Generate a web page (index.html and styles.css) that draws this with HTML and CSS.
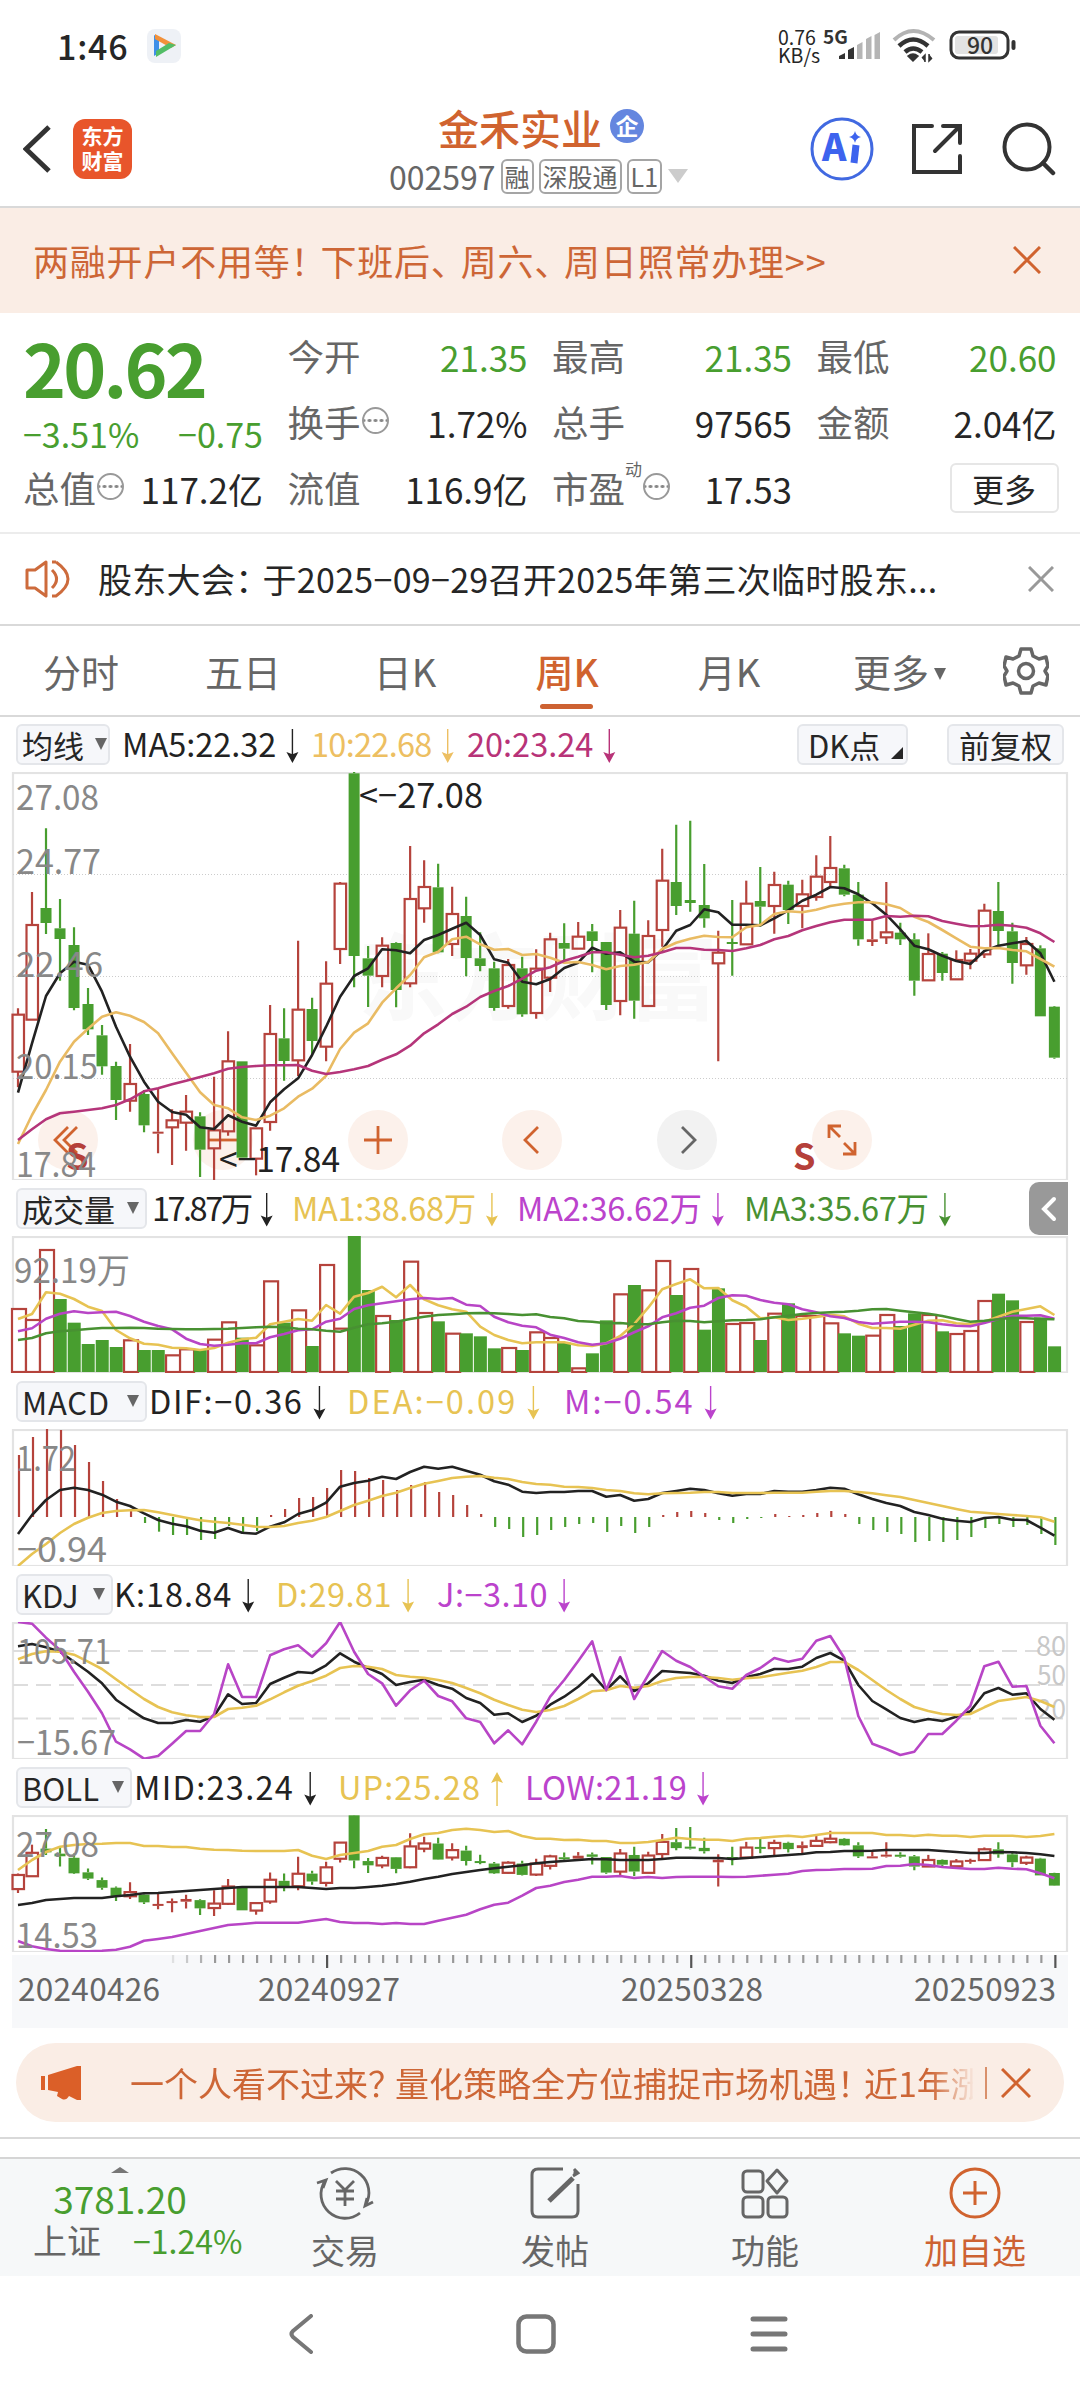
FILE: index.html
```html
<!DOCTYPE html>
<html lang="zh-CN">

<head>
    <meta charset="UTF-8">
    <meta name="viewport" content="width=device-width, initial-scale=1.0">
    <title>金禾实业 002597</title>
    <link rel="stylesheet" href="styles.css">
</head>

<body>
    <div class="status">
        <span class="clock">1:46</span>
        <svg class="app-icon" width="34" height="34" viewBox="0 0 34 34">
            <rect width="34" height="34" rx="8" fill="#eef1f6" />
            <path d="M7 6v21l5-3V9z" fill="#3f8fe8" />
            <path d="M8 5l21 11-5 3L8 10z" fill="#f2913a" />
            <path d="M29 16L9 28v-6l13-8z" fill="#52bd66" />
        </svg>
        <div class="net"><span>0.76</span><span>KB/s</span></div>
        <svg class="signal" width="62" height="36" viewBox="0 0 62 36">
            <text x="1" y="16" class="five-g">5G</text>
            <path d="M17 31h6v-6l-6 3zM26 31h6V19l-6 3z" fill="#333" />
            <path d="M35 31h5.5V14l-5.5 3zM44 31h5.5V8L44 11zM52.5 31h5.5V4l-5.5 3z" fill="#b5b5b5" />
        </svg>
        <svg class="wifi" width="44" height="36" viewBox="0 0 44 36">
            <path d="M2 12Q21-6 42 12" fill="none" stroke="#b3b3b3" stroke-width="4" />
            <path d="M7 18Q21 5 36 18M13 24Q21 17 30 24" fill="none" stroke="#333" stroke-width="4.5" />
            <path d="M16 28Q21 24 26 28L21 33zM33 34v-7l-3 3M37 26v7l3-3" fill="#333" stroke="#333" stroke-width="1.5" />
        </svg>
        <svg width="68" height="32" viewBox="0 0 68 32">
            <rect x="2" y="2" width="57" height="26" rx="8" fill="#fff" stroke="#333" stroke-width="3" />
            <rect x="6" y="6" width="43" height="18" rx="3" fill="#e2e2e2" />
            <path d="M64.5 12v6" stroke="#333" stroke-width="4" stroke-linecap="round" />
            <text x="31" y="23.5" text-anchor="middle" class="battery">90</text>
        </svg>
    </div>

    <header class="header">
        <svg class="back" width="30" height="50" viewBox="0 0 30 50">
            <path d="M26 3L3 25l23 22" fill="none" stroke="#333" stroke-width="5" />
        </svg>
        <div class="logo">东方<br>财富</div>
        <div class="title">
            <div class="name">金禾实业<span class="badge">企</span></div>
            <div class="code">002597<i>融</i><i>深股通</i><i>L1</i>
                <svg width="20" height="14" viewBox="0 0 20 14"><path d="M0 0h20L10 14z" fill="#ccc" /></svg>
            </div>
        </div>
        <svg class="ai" width="64" height="64" viewBox="0 0 64 64">
            <circle cx="32" cy="32" r="30" fill="none" stroke="#4169e1" stroke-width="3" />
            <text x="12" y="44" class="ai-text">A</text>
            <path d="M46 28l-2 18" stroke="#3d63ee" stroke-width="7" />
            <path d="M45 14q1 5 6 6-5 1-6 6-1-5-6-6 5-1 6-6z" fill="#3d63ee" />
        </svg>
        <svg class="share" width="52" height="52" viewBox="0 0 52 52">
            <path d="M21 3H3v46h46V33M32 3h17v17M48 4L24 28" fill="none" stroke="#333" stroke-width="4" stroke-linecap="round" />
        </svg>
        <svg width="54" height="54" viewBox="0 0 54 54">
            <circle cx="25" cy="25" r="22.5" fill="none" stroke="#333" stroke-width="4" />
            <path d="M41 41l10 10" stroke="#333" stroke-width="4.5" stroke-linecap="round" />
        </svg>
    </header>

    <div class="ad">
        <span>两融开户不用等<b>！</b>下班后<b>、</b>周六<b>、</b>周日照常办理&gt;&gt;</span>
        <svg width="28" height="28" viewBox="0 0 28 28"><path d="M1 1l26 26M27 1L1 27" stroke="#d0632f" stroke-width="3" /></svg>
    </div>

    <section class="quote">
        <div class="col">
            <div class="price">20.62</div>
            <div class="change"><span>−3.51%</span><span>−0.75</span></div>
            <div class="cell"><label>总值</label><em></em><span>117.2亿</span></div>
        </div>
        <div class="col">
            <div class="cell down"><label>今开</label><span>21.35</span></div>
            <div class="cell"><label>换手</label><em></em><span>1.72%</span></div>
            <div class="cell"><label>流值</label><span>116.9亿</span></div>
        </div>
        <div class="col">
            <div class="cell down"><label>最高</label><span>21.35</span></div>
            <div class="cell"><label>总手</label><span>97565</span></div>
            <div class="cell"><label>市盈</label><sup>动</sup><em></em><span>17.53</span></div>
        </div>
        <div class="col">
            <div class="cell down"><label>最低</label><span>20.60</span></div>
            <div class="cell"><label>金额</label><span>2.04亿</span></div>
            <div class="cell"><button class="more">更多</button></div>
        </div>
    </section>

    <div class="news">
        <svg width="46" height="40" viewBox="0 0 46 40">
            <path d="M2 11v18h8l11 8V3L10 11zM27 11q9 9 0 18M31 3q24 17 0 34h-4M27 3h4" fill="none" stroke="#cd6b3c" stroke-width="3" stroke-linejoin="round" />
        </svg>
        <span>股东大会<b>：</b>于2025−09−29召开2025年第三次临时股东...</span>
        <svg width="26" height="26" viewBox="0 0 26 26"><path d="M1 1l24 24M25 1L1 25" stroke="#999" stroke-width="3" /></svg>
    </div>

    <nav class="tabs">
        <a>分时</a>
        <a>五日</a>
        <a>日K</a>
        <a class="active">周K</a>
        <a>月K</a>
        <a class="tab-more">更多<i class="tri"></i></a>
        <svg width="46" height="48" viewBox="0 0 46 48">
            <path d="M18 2h10l2 7 6 3 7-2 2 9-3 5 3 5-2 9-7-2-6 3-2 7H18l-2-7-6-3-7 2-2-9 3-5-3-5 2-9 7 2 6-3z" fill="none" stroke="#666" stroke-width="3.5" stroke-linejoin="round" />
            <circle cx="23" cy="24" r="7.5" fill="none" stroke="#666" stroke-width="3.5" />
        </svg>
    </nav>

    <main class="charts">
        <div class="legend first">
            <button class="b-ma">均线<i class="tri"></i></button>
            <span class="black ma5">MA5:22.32</span>
            <span class="gold ma10">10:22.68</span>
            <span class="magenta">20:23.24</span>
            <button class="dk">DK点<i class="corner"></i></button>
            <button class="fq">前复权</button>
        </div>
        <svg id="price" width="1080" height="408"></svg>

        <div class="legend">
            <button class="b-vol">成交量<i class="tri"></i></button>
            <span class="black vol">17.87万</span>
            <span class="yellow vma1">MA1:38.68万</span>
            <span class="purple vma2">MA2:36.62万</span>
            <span class="green vma3">MA3:35.67万</span>
            <div class="drawer"><svg width="16" height="26" viewBox="0 0 16 26"><path d="M13 3L3 13l10 10" fill="none" stroke="#fff" stroke-width="4" stroke-linecap="round" /></svg></div>
        </div>
        <svg id="volume" width="1080" height="137"></svg>

        <div class="legend">
            <button class="b-macd">MACD<i class="tri"></i></button>
            <span class="black dif">DIF:−0.36</span>
            <span class="yellow dea">DEA:−0.09</span>
            <span class="purple m">M:−0.54</span>
        </div>
        <svg id="macd" width="1080" height="137"></svg>

        <div class="legend">
            <button class="b-kdj">KDJ<i class="tri"></i></button>
            <span class="black k">K:18.84</span>
            <span class="yellow d">D:29.81</span>
            <span class="purple j">J:−3.10</span>
        </div>
        <svg id="kdj" width="1080" height="137"></svg>

        <div class="legend">
            <button class="b-boll">BOLL<i class="tri"></i></button>
            <span class="black mid">MID:23.24</span>
            <span class="yellow up">UP:25.28</span>
            <span class="purple low">LOW:21.19</span>
        </div>
        <svg id="boll" width="1080" height="137"></svg>

        <div class="axis">
            <svg id="ticks" width="1080" height="16"></svg>
            <div class="dates"><span>20240426</span><span>20240927</span><span>20250328</span><span>20250923</span></div>
        </div>
    </main>

    <div class="promo">
        <svg width="42" height="36" viewBox="0 0 42 36">
            <path d="M2 11v14" stroke="#db5f28" stroke-width="4" />
            <path d="M7 10L36 1h4v34h-4l-8-4q-3 5-7 3l-5-3 1-4-10-2z" fill="#db5f28" />
        </svg>
        <div class="promo-text">一个人看不过来<b>？</b>量化策略全方位捕捉市场机遇<b>！</b>近1年涨</div>
        <i class="divider"></i>
        <svg width="30" height="30" viewBox="0 0 30 30"><path d="M1 1l28 28M29 1L1 29" stroke="#d0632f" stroke-width="3" /></svg>
    </div>

    <footer class="toolbar">
        <div class="index">
            <i class="caret"></i>
            <div class="value">3781.20</div>
            <div class="pct"><span>上证</span><b>−1.24%</b></div>
        </div>
        <div class="item">
            <svg width="58" height="54" viewBox="0 0 58 54">
                <path d="M15 7A24 24 0 0 1 50 38M44 47A24 24 0 0 1 9 15M1 17l9-3-3 8M57 36l-8 4 2-8" fill="none" stroke="#666" stroke-width="2.8" />
                <path d="M20 15l9 9 9-9M29 24v16M20 25h18M20 33h18" fill="none" stroke="#666" stroke-width="2.8" />
            </svg>
            交易
        </div>
        <div class="item">
            <svg width="50" height="54" viewBox="0 0 50 54">
                <path d="M33 3H8q-6 0-6 6v36q0 6 6 6h34q6 0 6-6V18" fill="none" stroke="#666" stroke-width="3" />
                <path d="M43 12L19 35" stroke="#666" stroke-width="5" />
                <path d="M44 3l4 4-5 3" fill="#666" stroke="#666" stroke-width="3" />
            </svg>
            发帖
        </div>
        <div class="item">
            <svg width="48" height="54" viewBox="0 0 48 54">
                <g fill="none" stroke="#666" stroke-width="3">
                    <rect x="2" y="5" width="20" height="21" rx="4" />
                    <rect x="2" y="31" width="20" height="20" rx="4" />
                    <rect x="27" y="31" width="19" height="20" rx="4" />
                    <path d="M36 4l10 11-10 12-10-12z" stroke-linejoin="round" />
                </g>
            </svg>
            功能
        </div>
        <div class="item add">
            <svg width="52" height="54" viewBox="0 0 52 54">
                <circle cx="26" cy="27" r="24" fill="none" stroke="#d0632f" stroke-width="3" />
                <path d="M14 27h24M26 15v24" stroke="#d0632f" stroke-width="3" />
            </svg>
            加自选
        </div>
    </footer>

    <div class="sysnav">
        <svg width="26" height="40" viewBox="0 0 26 40"><path d="M23 2L5 17q-3 3 0 6l18 15" fill="none" stroke="#777" stroke-width="4" stroke-linecap="round" /></svg>
        <svg class="home" width="40" height="40" viewBox="0 0 40 40"><rect x="2.5" y="2.5" width="35" height="35" rx="8" fill="none" stroke="#777" stroke-width="4.5" /></svg>
        <svg width="38" height="38" viewBox="0 0 38 38"><path d="M3 4h32M3 19h32M3 34h32" stroke="#777" stroke-width="5" stroke-linecap="round" /></svg>
    </div>

    <script src="chart.js"></script>
</body>

</html>
```
FILE: styles.css
```css
* {
    box-sizing: border-box;
}

body {
    margin: 0;
    width: 1080px;
    height: 2400px;
    overflow: hidden;
    background: #fff;
    color: #262626;
    font-family: "Noto Sans CJK SC", sans-serif;
    font-size: 34px;
    line-height: 1;
}

svg {
    display: block;
    flex: none;
}

i,
em {
    font-style: normal;
}

button {
    font: inherit;
    color: inherit;
    padding: 0;
}

/* status bar */
.status {
    height: 92px;
    padding: 0 63px 0 57px;
    display: flex;
    align-items: center;
}

.clock {
    font-size: 34px;
    font-weight: 500;
    width: 90px;
    letter-spacing: 0.8px;
}

.net {
    margin-left: auto;
    width: 44px;
    font-size: 19.5px;
    line-height: 18px;
    display: flex;
    flex-direction: column;
}

.five-g {
    font-size: 19px;
    font-weight: 700;
    fill: #333;
}

.signal {
    margin-right: 8px;
    overflow: visible;
}

.wifi {
    margin-right: 13px;
}

.battery {
    font-size: 23px;
    font-weight: 500;
    fill: #333;
}

/* header */
.header {
    height: 116px;
    padding: 0 24px 0 23px;
    border-bottom: 2px solid #d9d9d9;
    display: flex;
    align-items: center;
}

.logo {
    width: 59px;
    height: 60px;
    margin-left: 20px;
    border-radius: 12px;
    background: #e8552b;
    color: #fff;
    font-size: 21px;
    line-height: 25px;
    font-weight: 700;
    text-align: center;
    padding-top: 4px;
}

.title {
    width: 300px;
    margin-left: 257px;
    padding-top: 2px;
    white-space: nowrap;
}

.name {
    display: flex;
    align-items: center;
    margin-left: 49px;
    color: #d0632f;
    font-size: 41px;
    font-weight: 500;
}

.badge {
    width: 34px;
    height: 34px;
    margin: -2px 0 0 8px;
    border-radius: 50%;
    background: #6486df;
    color: #fff;
    font-size: 23px;
    line-height: 33px;
    font-weight: 700;
    text-align: center;
}

.code {
    display: flex;
    align-items: center;
    margin-top: 11px;
    color: #666;
    font-size: 32px;
}

.code i {
    height: 35px;
    margin-left: 5px;
    padding: 0 2px;
    border: 2px solid #a5a5a5;
    border-radius: 6px;
    font-size: 25px;
    line-height: 30px;
}

.code svg {
    margin-left: 6px;
}

.ai {
    margin-left: 121px;
}

.ai-text {
    font-size: 37px;
    font-weight: 900;
    fill: #3d63ee;
}

.share {
    margin: 0 39px 0 37px;
}

/* promo strips */
.ad {
    height: 105px;
    padding: 0 39px 2px 33px;
    background: #faede5;
    color: #cd6636;
    font-size: 36px;
    letter-spacing: 0.8px;
    display: flex;
    align-items: center;
    justify-content: space-between;
}

.ad b,
.news b,
.promo b {
    font-weight: 400;
    margin-right: -7px;
}

/* quote */
.quote {
    height: 221px;
    padding: 10px 24px 0 23px;
    border-bottom: 2px solid #ececec;
    display: grid;
    grid-template-columns: repeat(4, 240px);
    column-gap: 24.5px;
}

.price {
    height: 90px;
    color: #489e2f;
    font-size: 73px;
    line-height: 86px;
    font-weight: 700;
    letter-spacing: -2.8px;
}

.change {
    height: 42px;
    color: #489e2f;
    font-size: 34px;
    display: flex;
    align-items: center;
    justify-content: space-between;
}

.cell {
    height: 66px;
    display: flex;
    align-items: center;
    font-size: 35px;
}

.cell label {
    color: #666;
    font-size: 36.5px;
}

.cell span {
    margin-left: auto;
}

.down span {
    color: #489e2f;
}

.cell em {
    width: 27px;
    height: 27px;
    margin: -4px 0 0 1px;
    border: 2px solid #999;
    border-radius: 50%;
    background: radial-gradient(circle, #888 1.6px, transparent 2px) 0 0 / 6px 100%;
    background-position: 2.5px 0;
}

.cell sup {
    align-self: flex-start;
    font-size: 17px;
    color: #666;
    line-height: 28px;
}

.more {
    width: 109px;
    height: 50px;
    margin: 0 -2px 0 auto;
    border: 2px solid #e6e6e6;
    border-radius: 6px;
    background: #fff;
    font-size: 32px;
    line-height: 42px;
}

/* news */
.news {
    height: 92px;
    padding: 0 26px 0 25px;
    border-bottom: 2px solid #d9d9d9;
    display: flex;
    align-items: center;
}

.news span {
    flex: 1;
    margin-left: 27px;
    letter-spacing: 0.3px;
}

/* tabs */
.tabs {
    height: 91px;
    border-bottom: 2px solid #d9d9d9;
    display: flex;
    align-items: center;
    color: #666;
    font-size: 38px;
}

.tabs a {
    position: relative;
    width: 162px;
    line-height: 86px;
    text-align: center;
}

.tabs .active {
    color: #d0632f;
    font-weight: 500;
}

.tabs .active::after {
    content: "";
    position: absolute;
    left: 54px;
    bottom: 5px;
    width: 53px;
    height: 5px;
    border-radius: 3px;
    background: #cd6232;
}

.tabs .tab-more {
    width: 193px;
    padding-right: 14px;
}

.tri {
    display: inline-block;
    border: 6.5px solid transparent;
    border-top: 12px solid #666;
    border-bottom: 0;
    margin-left: 5px;
    vertical-align: 7px;
}

/* chart legends */
.legend {
    position: relative;
    height: 56px;
    padding: 0 16px;
    display: flex;
    align-items: center;
    font-size: 32.5px;
}

.legend.first {
    height: 55px;
}

.legend button {
    position: relative;
    height: 41px;
    padding: 0 0 0 4px;
    border: 2px solid #e4e6ea;
    border-radius: 6px;
    background: #f6f7fa;
    font-size: 31px;
    line-height: 35px;
    text-align: left;
    white-space: nowrap;
}

.legend .tri {
    position: absolute;
    right: 6px;
    top: 12px;
    margin: 0;
}

.legend .b-ma { width: 94px; margin-right: 12px; }
.legend .b-vol { width: 131px; margin-right: 5px; }
.legend .b-macd { width: 131px; margin-right: 2px; letter-spacing: 0.8px; }
.legend .b-kdj { width: 97px; margin-right: 1px; }
.legend .b-boll { width: 116px; margin-right: 2px; }

.legend .b-ma .tri {
    right: 1px;
}

.legend .dk {
    width: 111px;
    margin-left: auto;
    padding-left: 9px;
}

.legend .fq {
    width: 117px;
    margin-left: 39px;
    padding-left: 10px;
}

.corner {
    position: absolute;
    right: 3px;
    bottom: 4px;
    border: 6px solid #262626;
    border-top-color: transparent;
    border-left-color: transparent;
}

.legend span {
    flex: none;
    padding-top: 1px;
    white-space: nowrap;
}

.legend span::after {
    content: "";
    display: inline-block;
    width: 14px;
    height: 34px;
    margin-left: 9px;
    vertical-align: -6px;
    background: currentColor;
    clip-path: polygon(6.3px 0, 7.7px 0, 7.7px 25px, 13px 23px, 7px 34px, 1px 23px, 6.3px 25px);
}

.legend .up::after {
    transform: scaleY(-1);
}

.ma5 { width: 189px; }
.ma10 { width: 156px; letter-spacing: -0.7px; }
.vol { width: 140px; letter-spacing: -2.5px; }
.vma1 { width: 225px; letter-spacing: -0.3px; }
.vma2 { width: 227px; letter-spacing: -0.2px; }
.vma3 { letter-spacing: -0.2px; }
.dif { width: 198px; letter-spacing: 1.6px; }
.dea { width: 217px; letter-spacing: 2.1px; }
.m { letter-spacing: 2px; }
.k { width: 162px; letter-spacing: 1px; }
.d { width: 161px; letter-spacing: 0.5px; }
.j { letter-spacing: 0.5px; }
.mid { width: 204px; letter-spacing: 1.3px; }
.up { width: 187px; letter-spacing: 1.1px; }
.low { letter-spacing: 0.3px; }

.black { color: #222; }
.gold { color: #edbf62; }
.yellow { color: #e7c353; }
.magenta { color: #b83378; }
.purple { color: #bb43cc; }
.green { color: #489132; }

.drawer {
    position: absolute;
    right: 12px;
    top: 2px;
    width: 39px;
    height: 53px;
    border-radius: 10px 0 0 10px;
    background: #999;
    display: flex;
    align-items: center;
    justify-content: center;
}

/* charts */
.scale {
    fill: #888;
    font-size: 34px;
}

.level {
    fill: #c8c8c8;
    font-size: 27px;
}

.mark {
    fill: #222;
    font-size: 34px;
}

.signal-s {
    fill: #b5403a;
    font-size: 36px;
    font-weight: 700;
}

.watermark {
    fill: #f9f9f9;
    font-size: 94px;
    font-weight: 700;
}

.axis {
    height: 73px;
    margin-top: 3px;
    background: linear-gradient(90deg, #fff 12px, #f7f8fa 12px, #f7f8fa 1068px, #fff 1068px);
}

.dates {
    display: flex;
    padding: 1px 0 0 18px;
    color: #666;
    font-size: 31.5px;
    letter-spacing: 0.3px;
}

.dates span {
    flex: none;
    width: 240px;
}

.dates span:nth-child(2) {
    width: 363px;
}

.dates span:nth-child(3) {
    width: 293px;
}

.dates span:nth-child(4) {
    width: 150px;
}

.promo {
    height: 79px;
    margin: 15px 16px;
    padding: 0 33px 0 25px;
    border-radius: 40px;
    background: #faede5;
    color: #cd6636;
    display: flex;
    align-items: center;
}

.promo-text {
    width: 843px;
    margin-left: 47px;
    overflow: hidden;
    white-space: nowrap;
    line-height: 50px;
    -webkit-mask: linear-gradient(90deg, #000 800px, transparent 846px);
    mask: linear-gradient(90deg, #000 800px, transparent 846px);
}

.divider {
    width: 2px;
    height: 32px;
    margin: 0 14px 0 12px;
    background: #d9906b;
}

/* bottom toolbar */
.toolbar {
    height: 139px;
    border-top: 2px solid #d9d9d9;
    display: flex;
    color: #666;
    background: linear-gradient(#fff 18px, #d5d5d5 18px, #d5d5d5 20px, #f6f8f9 20px);
}

.index {
    width: 240px;
    padding-top: 28px;
    display: flex;
    flex-direction: column;
    align-items: center;
}

.caret {
    border: 9px solid transparent;
    border-top: 0;
    border-bottom: 6px solid #777;
}

.value {
    margin-top: 7px;
    color: #489e2f;
    font-size: 37px;
    line-height: 36px;
}

.pct {
    align-self: flex-start;
    display: flex;
    gap: 32px;
    margin: 7px 0 0 33px;
    white-space: nowrap;
}

.pct b {
    color: #489e2f;
    font-weight: 400;
    font-size: 32px;
    line-height: 34px;
}

.item {
    width: 210px;
    padding-top: 27px;
    display: flex;
    flex-direction: column;
    align-items: center;
    gap: 13px;
}

.add {
    color: #cd6232;
}

.sysnav {
    height: 124px;
    padding: 0 292px 8px 288px;
    display: flex;
    align-items: center;
    justify-content: space-between;
}

.home {
    margin-left: 8px;
}
```
FILE: chart.js
```javascript
var STEP = 14.005,
    X0 = 18,
    RED = '#b5433c',
    GREEN = '#489e2f';

// r = rising, g = falling; then high, body top, body bottom, low
// vertical values are in thirds of a pixel, counted from each panel's own origin
var candles = [
    'r745,764,935,982', 'r396,495,779,779', 'g205,444,489,522', 'g417,505,537,662', 'g502,555,744,751',
    'g684,732,808,825', 'g795,826,919,944', 'g905,918,1020,1080', 'r852,972,1022,1055', 'g990,1002,1096,1117',
    'r985,1115,1115,1180', 'r1048,1081,1102,1215', 'r1005,1055,1088,1172', 'g1057,1069,1169,1251', 'r950,1111,1165,1262',
    'r814,904,1114,1127', 'g904,904,1193,1193', 'r1105,1105,1196,1246', 'r735,822,1086,1112', 'g745,835,903,962',
    'r542,749,901,948', 'g713,747,843,883', 'r604,671,860,904', 'r366,371,567,612', 'g36,40,588,682',
    'g558,595,647,741', 'r532,557,648,682', 'g547,549,690,742', 'r258,417,670,682', 'r301,381,445,488',
    'g311,382,577,580', 'r380,462,552,588', 'g410,468,594,649', 'g517,595,618,634', 'g605,625,744,752',
    'r597,615,738,746', 'g590,625,763,770', 'r568,626,759,776', 'r518,538,653,696', 'g490,549,566,605',
    'r486,530,566,566', 'g492,514,543,637', 'g546,546,735,750', 'r450,503,723,766', 'g422,521,722,776',
    'r481,528,738,740', 'r266,362,510,560', 'g194,366,438,465', 'g182,420,429,455', 'g312,435,475,503',
    'r512,578,610,904', 'g420,546,551,647', 'r362,431,553,553', 'g321,423,440,500', 'r335,375,438,521',
    'g362,374,450,492', 'r359,403,438,505', 'r286,350,411,422', 'r228,324,366,380', 'g314,325,404,409',
    'g366,404,538,557', 'r481,538,546,558', 'r366,517,532,552', 'g488,518,538,555', 'g520,538,662,707',
    'r520,582,661,661', 'g576,581,639,662', 'r571,600,658,658', 'r567,581,602,628', 'r431,452,583,594',
    'g366,453,513,555', 'g488,514,609,671', 'r531,552,616,644', 'g556,565,769,769', 'g738,740,893,896'
];

var ma5 = [998, 850, 708, 640, 605, 614, 695, 800, 890, 965, 1025, 1056, 1064, 1102, 1107, 1066, 1085, 1097, 1027, 988, 955, 885, 800, 710, 648, 625, 568, 571, 580, 540, 525, 506, 488, 525, 598, 608, 665, 673, 657, 624, 608, 563, 581, 577, 605, 607, 570, 512, 495, 448, 457, 494, 494, 496, 475, 451, 422, 404, 381, 385, 403, 430, 464, 508, 557, 568, 587, 603, 612, 573, 557, 550, 543, 580, 665],
    ma10 = [1152, 1065, 990, 905, 845, 806, 770, 757, 767, 786, 820, 880, 938, 997, 1035, 1045, 1072, 1080, 1067, 1045, 1010, 986, 947, 867, 818, 790, 728, 685, 645, 592, 575, 538, 530, 553, 569, 567, 585, 582, 593, 608, 606, 615, 628, 618, 614, 606, 567, 548, 536, 527, 531, 532, 502, 495, 462, 454, 457, 449, 438, 431, 427, 427, 433, 444, 470, 486, 510, 535, 560, 565, 564, 570, 574, 597, 620],
    ma20 = [1140, 1108, 1078, 1060, 1055, 1050, 1045, 1035, 1018, 994, 985, 973, 962, 951, 940, 926, 921, 918, 916, 916, 915, 932, 942, 936, 928, 918, 899, 883, 857, 820, 793, 762, 740, 711, 693, 678, 656, 632, 622, 602, 590, 577, 577, 584, 592, 587, 577, 564, 564, 569, 570, 573, 565, 555, 538, 528, 511, 498, 487, 479, 479, 479, 468, 470, 467, 469, 483, 491, 499, 498, 494, 497, 503, 520, 546];

// negative = green bar
var volume = [384, 417, 207, -357, -428, -492, -480, -501, 478, -510, -510, 523, 505, -510, 476, 424, -473, 493, 301, -428, 388, -498, 252, 443, -168, -330, 405, -420, 242, 396, -424, 458, -460, -469, -505, 501, -510, 454, 471, -488, 562, -520, -421, 340, -315, 328, 240, -345, 264, -449, -325, 429, 426, -480, 398, -370, 405, 405, 427, -460, -467, 464, 402, -438, -400, 402, -454, 459, 450, 360, -341, -361, 423, -412, -499],
    vma1 = [417, 402, 337, 341, 357, 380, 393, 450, 475, 491, 494, 503, 505, 510, 504, 488, 478, 473, 433, 425, 417, 422, 375, 401, 350, 339, 320, 352, 315, 358, 376, 388, 395, 440, 465, 480, 490, 487, 487, 487, 496, 498, 490, 468, 432, 383, 328, 312, 298, 325, 324, 361, 380, 415, 412, 420, 416, 411, 404, 409, 431, 444, 444, 446, 434, 422, 421, 430, 433, 425, 410, 395, 387, 379, 405],
    vma2 = [454, 445, 416, 401, 394, 399, 397, 395, 408, 425, 438, 448, 476, 492, 497, 494, 490, 490, 472, 462, 451, 448, 425, 416, 387, 376, 370, 364, 358, 354, 357, 354, 374, 378, 410, 427, 437, 442, 464, 474, 487, 494, 490, 476, 457, 439, 412, 400, 383, 377, 354, 346, 347, 360, 368, 373, 388, 397, 409, 414, 426, 431, 428, 425, 425, 427, 433, 437, 439, 429, 417, 408, 407, 406, 416],
    vma3 = [480, 474, 460, 454, 451, 447, 444, 444, 443, 444, 446, 447, 448, 448, 447, 446, 444, 442, 440, 442, 446, 448, 452, 455, 443, 433, 430, 425, 417, 410, 405, 403, 400, 399, 400, 402, 405, 403, 411, 415, 423, 425, 430, 429, 433, 433, 427, 422, 423, 427, 424, 421, 420, 418, 412, 407, 402, 399, 397, 395, 392, 388, 387, 392, 397, 401, 408, 417, 425, 422, 418, 413, 415, 417, 418];

var macd = [825, 771, 747, 750, 795, 846, 903, 957, 990, 1029, 1055, 1065, 1065, 1080, 1077, 1038, 1057, 1053, 1005, 987, 954, 951, 924, 870, 873, 894, 900, 930, 915, 906, 936, 945, 975, 1002, 1041, 1047, 1071, 1065, 1050, 1041, 1032, 1029, 1056, 1038, 1059, 1041, 1005, 996, 993, 999, 1020, 1029, 1017, 1014, 1002, 1008, 1005, 999, 993, 1002, 1032, 1050, 1056, 1062, 1086, 1083, 1086, 1080, 1071, 1044, 1032, 1041, 1035, 1062, 1095],
    dif = [1062, 1005, 960, 930, 923, 930, 944, 965, 978, 1000, 1020, 1031, 1039, 1052, 1058, 1044, 1058, 1061, 1040, 1027, 1002, 990, 968, 920, 909, 902, 890, 897, 876, 860, 866, 860, 872, 884, 904, 914, 935, 939, 936, 936, 933, 933, 950, 945, 962, 957, 939, 933, 926, 930, 940, 947, 942, 942, 933, 935, 935, 930, 923, 926, 943, 957, 969, 978, 996, 1005, 1016, 1022, 1026, 1014, 1011, 1019, 1020, 1043, 1067],
    dea = [1158, 1122, 1092, 1059, 1032, 1013, 999, 993, 991, 990, 997, 1005, 1013, 1021, 1025, 1029, 1034, 1040, 1041, 1038, 1029, 1022, 1011, 993, 975, 962, 948, 938, 924, 911, 903, 894, 890, 888, 893, 897, 906, 912, 914, 920, 921, 924, 930, 933, 940, 943, 940, 939, 938, 936, 936, 939, 939, 939, 938, 938, 938, 935, 933, 933, 936, 940, 946, 951, 960, 969, 978, 987, 995, 998, 1002, 1005, 1008, 1012, 1025];

var k = [229, 222, 232, 245, 275, 305, 340, 389, 418, 445, 459, 459, 450, 455, 438, 373, 402, 399, 342, 323, 306, 309, 286, 250, 275, 294, 312, 345, 336, 329, 345, 356, 384, 399, 434, 430, 456, 437, 404, 380, 350, 313, 360, 319, 363, 340, 303, 306, 309, 317, 332, 339, 321, 312, 297, 297, 290, 264, 249, 272, 345, 393, 418, 444, 456, 447, 453, 440, 424, 370, 354, 374, 370, 417, 449],
    d = [268, 252, 244, 245, 254, 275, 297, 328, 358, 387, 411, 427, 436, 441, 441, 417, 413, 407, 388, 367, 347, 333, 317, 294, 288, 290, 297, 315, 320, 323, 330, 339, 354, 370, 389, 405, 419, 426, 420, 408, 387, 364, 361, 348, 353, 348, 333, 324, 321, 321, 324, 329, 325, 322, 315, 308, 302, 291, 276, 276, 300, 330, 360, 387, 411, 423, 432, 435, 432, 412, 393, 387, 381, 393, 411],
    j = [156, 161, 203, 240, 305, 365, 430, 515, 538, 566, 558, 521, 483, 483, 432, 283, 381, 381, 256, 238, 226, 260, 220, 156, 245, 312, 340, 407, 361, 332, 378, 394, 445, 456, 520, 481, 523, 455, 380, 330, 273, 214, 360, 262, 387, 315, 243, 272, 291, 320, 349, 356, 315, 294, 264, 275, 266, 212, 198, 264, 438, 521, 537, 555, 545, 492, 492, 452, 408, 289, 275, 350, 348, 467, 520];

var upper = [900, 870, 846, 830, 825, 822, 821, 819, 819, 828, 828, 831, 831, 836, 839, 840, 842, 843, 843, 843, 840, 857, 867, 855, 849, 843, 830, 825, 807, 793, 789, 780, 776, 780, 786, 783, 798, 806, 806, 810, 809, 813, 813, 819, 819, 816, 810, 803, 807, 809, 809, 813, 806, 804, 800, 797, 801, 795, 789, 789, 789, 789, 795, 795, 798, 794, 797, 797, 801, 797, 797, 797, 801, 798, 792],
    mid = [1005, 999, 990, 987, 984, 984, 984, 979, 975, 970, 969, 966, 963, 960, 957, 954, 951, 951, 951, 951, 951, 954, 957, 954, 954, 951, 947, 942, 935, 927, 920, 912, 906, 900, 895, 890, 886, 880, 876, 873, 870, 867, 868, 870, 870, 870, 867, 863, 863, 864, 864, 867, 864, 861, 858, 855, 852, 847, 846, 843, 843, 842, 840, 840, 840, 840, 843, 846, 849, 849, 846, 847, 849, 853, 858],
    lower = [1113, 1129, 1137, 1142, 1143, 1144, 1142, 1139, 1130, 1112, 1107, 1101, 1092, 1083, 1074, 1065, 1062, 1058, 1058, 1058, 1058, 1052, 1047, 1056, 1059, 1059, 1062, 1059, 1062, 1062, 1052, 1043, 1034, 1018, 1004, 998, 977, 954, 947, 936, 929, 920, 920, 918, 924, 921, 924, 921, 920, 920, 920, 921, 920, 917, 914, 911, 903, 900, 899, 897, 897, 896, 888, 887, 882, 885, 891, 894, 897, 897, 893, 896, 898, 910, 925];

function x(i) {
    return X0 + i * STEP;
}

function rect(x, y, w, h, fill, stroke) {
    return '<rect x="' + x + '" y="' + y + '" width="' + w + '" height="' + h + '" fill="' + fill + '"' +
        (stroke ? ' stroke="' + stroke + '" stroke-width="2.2"' : '') + '/>';
}

function path(d, stroke, extra) {
    return '<path d="' + d + '" fill="none" stroke="' + stroke + '" stroke-width="2.2" ' + (extra || '') + '/>';
}

function line(data, top, color) {
    var pts = data.map(function(v, i) {
        return x(i).toFixed(1) + ' ' + ((v - top) / 3).toFixed(1);
    });
    return path('M' + pts.join('L'), color, 'stroke-linejoin="round" style="stroke-width:2.6px"');
}

function text(cls, x, y, str, len) {
    return '<text class="' + cls + '" x="' + x + '" y="' + y + '"' +
        (len ? ' textLength="' + len + '" lengthAdjust="spacingAndGlyphs"' : '') + '>' + str + '</text>';
}

function frame(h) {
    return rect(13, 1, 1054, h - 1, 'none', '#e3e3e3');
}

function drawCandles(scale) {
    return candles.map(function(c, i) {
        var color = c[0] == 'r' ? RED : GREEN,
            v = c.slice(1).split(',').map(function(n) {
                return (n - 36) / 3 * scale;
            }),
            cx = x(i),
            h = Math.max(v[2] - v[1], 2),
            wicks = path('M' + cx + ' ' + v[0] + 'V' + v[1] + 'M' + cx + ' ' + (v[1] + h) + 'V' + Math.max(v[3], v[1] + h), color);
        if (c[0] == 'g' || h < 3) {
            return wicks + rect(cx - 5.5, v[1], 11, h, color);
        }
        return wicks + rect(cx - 5.5, v[1], 11.5, h, 'none', color);
    }).join('');
}

function roundButton(cx, icon, grey) {
    return '<circle cx="' + cx + '" cy="368" r="30" fill="' + (grey ? '#f2f2f2' : '#fcf1eb') + '"/>' +
        '<g transform="translate(' + cx + ' 368)">' + path(icon, grey ? '#666' : '#d0632f', 'style="stroke-width:2.8px"') + '</g>';
}

function put(id, html) {
    document.getElementById(id).innerHTML = html;
}

put('price', frame(408) +
    text('watermark', 358, 241, '东方财富', 360) +
    path('M13 102.5H1067M13 204.5H1067M13 306.5H1067', '#ccc', 'stroke-dasharray="1 2" style="stroke-width:1px"') +
    roundButton(68, 'M0-13L-13 0L0 13M9-13L-4 0L9 13') +
    roundButton(223, 'M-14 0H14') +
    roundButton(378, 'M-14 0H14M0-14V14') +
    roundButton(532, 'M6-13L-7 0L6 13') +
    roundButton(687, 'M-5-13L8 0L-5 13', true) +
    roundButton(842, 'M-1-14H-13V-2M-13-14L-2-3M13 2V14H1M13 14L2 3') +
    drawCandles(1) +
    line(ma5, 36, '#222') + line(ma10, 36, '#e9bb63') + line(ma20, 36, '#b5357a') +
    text('signal-s', 66, 398, 'S') + text('signal-s', 793, 398, 'S') +
    text('scale', 16, 38, '27.08', 83) + text('scale', 16, 102, '24.77', 85) +
    text('scale', 16, 205, '22.46', 87) + text('scale', 16, 307, '20.15', 82) +
    text('scale', 16, 405, '17.84', 80) +
    text('mark', 359, 36, '&lt;−27.08', 124) + text('mark', 219, 400, '&lt;−17.84', 121));

put('volume', frame(136.5) + volume.map(function(v, i) {
    var y = (Math.abs(v) - 168) / 3;
    return v < 0 ? rect(x(i) - 6.3, y, 13, 136 - y, GREEN) : rect(x(i) - 6, y + 1, 14, 135 - y, '#fff', RED);
}).join('') +
    line(vma1, 168, '#e7c353') + line(vma2, 168, '#b845c6') + line(vma3, 168, '#489132') +
    text('scale', 14, 47, '92.19万', 116));

put('macd', frame(137) + macd.map(function(v, i) {
    return path('M' + (x(i) + 1) + ' 88V' + (v - 747) / 3, v < 1011 ? RED : GREEN);
}).join('') +
    line(dif, 747, '#222') + line(dea, 747, '#e7c353') +
    text('scale', 16, 42, '1.72', 60) + text('scale', 17, 133, '−0.94', 90));

put('kdj', frame(137) +
    path('M13 29H1067M13 63H1067M13 96.5H1067', '#ddd', 'stroke-dasharray="15 8"') +
    text('level', 1036, 34, '80', 30) + text('level', 1037, 63, '50', 29) + text('level', 1037, 97, '20', 29) +
    line(k, 156, '#222') + line(d, 156, '#e7c353') + line(j, 156, '#b845c6') +
    text('scale', 17, 42, '105.71', 94) + text('scale', 17, 133, '−15.67', 99));

// same candles on the wider 14.53 - 27.08 range
put('boll', frame(137) + drawCandles(0.2472) +
    line(upper, 735, '#e7c353') + line(mid, 735, '#222') + line(lower, 735, '#b845c6') +
    text('scale', 16, 42, '27.08', 83) + text('scale', 16, 133, '14.53', 82));

var ticks = '';
for (var i = 11; i < 75; i++) {
    var major = i == 22 || i == 48 || i == 74;
    ticks += path('M' + (x(i) + 1) + ' 0V' + (major ? 13 : 8), major ? '#555' : '#999', i < 14 ? 'opacity="' + (i - 10) / 4 + '"' : '');
}
put('ticks', ticks);
```
